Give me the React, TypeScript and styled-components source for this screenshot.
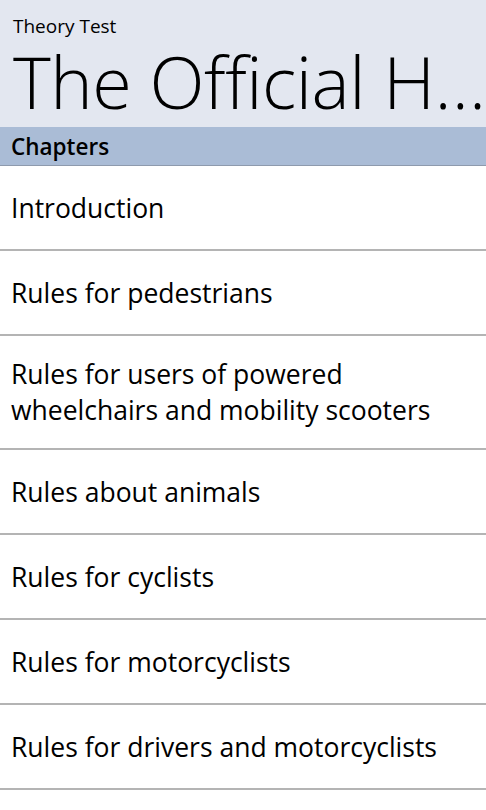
import styled, { createGlobalStyle } from "styled-components";

const GlobalStyle = createGlobalStyle`
    body {
        margin: 0;
        background: #ffffff;
        font-family: "Open Sans", "Noto Sans", sans-serif;
        color: #000000;
    }
`;

const Page = styled.div`
    width: 486px;
    min-height: 810px;
    background: #ffffff;
    overflow: hidden;
`;

const Header = styled.header`
    background: #e3e7f0;
    height: 127px;
    padding: 14px 0 0 13px;
    box-sizing: border-box;
    display: flex;
    flex-direction: column;
    gap: 4px;
`;

const AppName = styled.div`
    font-size: 19px;
    line-height: 24px;
`;

const Title = styled.h1`
    margin: 0;
    font-size: 72px;
    font-weight: 300;
    line-height: 78px;
    white-space: nowrap;
    overflow: hidden;
    text-overflow: ellipsis;
    letter-spacing: -0.5px;
`;

const SectionBar = styled.div`
    background: #aabcd6;
    height: 39px;
    border-bottom: 1px solid #8e9aad;
    display: flex;
    align-items: center;
    padding-left: 11px;
    font-size: 22.5px;
    font-weight: 600;
    box-sizing: border-box;
`;

const List = styled.ul`
    list-style: none;
    margin: 0;
    padding: 0;
`;

const Row = styled.li`
    display: flex;
    align-items: center;
    min-height: 85px;
    padding: 20px 20px 20px 11px;
    border-bottom: 2px solid #b4b4b4;
    font-size: 26.5px;
    line-height: 36px;
    box-sizing: border-box;
`;

const chapters = [
    "Introduction",
    "Rules for pedestrians",
    "Rules for users of powered wheelchairs and mobility scooters",
    "Rules about animals",
    "Rules for cyclists",
    "Rules for motorcyclists",
    "Rules for drivers and motorcyclists",
];

export default function App() {
    return (
        <Page>
            <GlobalStyle />
            <Header>
                <AppName>Theory Test</AppName>
                <Title>The Official Highway Code</Title>
            </Header>
            <SectionBar>Chapters</SectionBar>
            <List>
                {chapters.map((c) => (
                    <Row key={c}>{c}</Row>
                ))}
            </List>
        </Page>
    );
}
